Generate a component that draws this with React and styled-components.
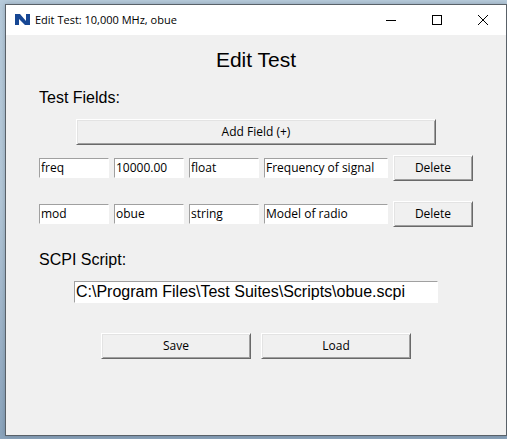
import React, { useState } from "react";
import styled, { createGlobalStyle } from "styled-components";

const GlobalStyle = createGlobalStyle`
  *, *::before, *::after { box-sizing: border-box; }
  body { margin: 0; background: #a9bdd0; }
`;

const Desktop = styled.div`
  display: flex;
  min-height: 100vh;
  padding: 4px 0 3px 5px;
  background: linear-gradient(180deg, #b7cbdb 0%, #b4c8d8 45%, #8ba4bc 100%);
`;

const Window = styled.main`
  flex: 1;
  min-width: 0;
  display: flex;
  flex-direction: column;
  border: 1px solid #596168;
  background: #f0f0f0;
  color: #000;
  box-shadow: 0 0 5px rgba(40, 60, 80, 0.3);
`;

const TitleBar = styled.header`
  display: flex;
  align-items: center;
  height: 30px;
  padding-left: 9px;
  background: #fff;
  font: 11px/16px "Open Sans", "Noto Sans", sans-serif;
`;

const Caption = styled.span`
  flex: 1;
  min-width: 0;
  margin-left: 5px;
  overflow: hidden;
  white-space: nowrap;
`;

const CaptionButton = styled.button`
  display: flex;
  align-items: center;
  justify-content: center;
  width: 46px;
  height: 30px;
  padding: 0;
  border: 0;
  background: #fff;
  color: #000;
`;

const Form = styled.form`
  flex: 1;
  display: flex;
  flex-direction: column;
  padding: 12px 33px 0;
`;

const Heading = styled.h1`
  margin: 0;
  font: 400 21px/26px "Liberation Sans", Arial, sans-serif;
  text-align: center;
`;

const SectionLabel = styled.label`
  display: block;
  margin-top: ${(p) => p.$gap};
  font: 16px/20px "Liberation Sans", Arial, sans-serif;
`;

const Button = styled.button`
  flex: 1;
  min-width: 0;
  height: 26px;
  padding: 0;
  border: 1px solid;
  border-color: #fff #696969 #696969 #fff;
  box-shadow: inset 1px 1px #e3e3e3, inset -1px -1px #a0a0a0;
  background: #f0f0f0;
  color: #000;
  font: 12px/16px "Open Sans", "Noto Sans", sans-serif;
`;

const Entry = styled.input`
  width: 100%;
  min-width: 0;
  height: 20px;
  padding: 0 1px 2px;
  border: 1px solid;
  border-color: #a0a0a0 #fff #fff #a0a0a0;
  border-radius: 0;
  background: #fff;
  color: #000;
  font: 12px/16px "Open Sans", "Noto Sans", sans-serif;
  outline: none;
`;

const PathEntry = styled(Entry)`
  height: 22px;
  padding: 0 1px;
  font: 16px/20px "Liberation Sans", Arial, sans-serif;
`;

const ButtonRow = styled.div`
  display: flex;
  gap: 10px;
  margin-top: ${(p) => p.$gap};
  padding: 0 ${(p) => p.$inset};
`;

const FieldList = styled.div`
  display: flex;
  flex-direction: column;
  gap: 20px;
  margin-top: 10px;
`;

const FieldRow = styled.div`
  display: grid;
  grid-template-columns: 70fr 70fr 70fr 124fr 80fr;
  align-items: center;
  gap: 5px;
`;

const PathRow = styled.div`
  display: flex;
  margin-top: 11px;
  padding: 0 35px;
`;

const initialFields = [
  { name: "freq", value: "10000.00", type: "float", description: "Frequency of signal" },
  { name: "mod", value: "obue", type: "string", description: "Model of radio" },
];
const columns = ["name", "value", "type", "description"];

function Logo() {
  return (
    <svg width="15" height="12" viewBox="0 0 15 12" aria-hidden="true">
      <path d="M0 0H5L11 7V0H15V11H10L4 5V11H0Z" fill="#174794" />
    </svg>
  );
}

function Glyph({ d, crisp }) {
  return (
    <svg width="10" height="10" viewBox="0 0 10 10" aria-hidden="true">
      <path d={d} fill="none" stroke="currentColor" shapeRendering={crisp ? "crispEdges" : "auto"} />
    </svg>
  );
}

export default function App() {
  const [fields, setFields] = useState(initialFields);
  const [path, setPath] = useState("C:\\Program Files\\Test Suites\\Scripts\\obue.scpi");

  const update = (index, key, text) =>
    setFields(fields.map((f, i) => (i === index ? { ...f, [key]: text } : f)));
  const add = () => setFields([...fields, { name: "", value: "", type: "", description: "" }]);
  const remove = (index) => setFields(fields.filter((_, i) => i !== index));

  return (
    <>
      <GlobalStyle />
      <Desktop>
        <Window>
          <TitleBar>
            <Logo />
            <Caption>Edit Test: 10,000 MHz, obue</Caption>
            <CaptionButton type="button" aria-label="Minimize">
              <Glyph d="M0 5.5H10" crisp />
            </CaptionButton>
            <CaptionButton type="button" aria-label="Maximize">
              <Glyph d="M.5 .5H9.5V9.5H.5Z" crisp />
            </CaptionButton>
            <CaptionButton type="button" aria-label="Close">
              <Glyph d="M0 0L10 10M10 0L0 10" />
            </CaptionButton>
          </TitleBar>
          <Form onSubmit={(e) => e.preventDefault()}>
            <Heading>Edit Test</Heading>
            <SectionLabel as="div" id="fields-label" $gap="15px">Test Fields:</SectionLabel>
            <ButtonRow $gap="11px" $inset="37px">
              <Button type="button" onClick={add}>Add Field (+)</Button>
            </ButtonRow>
            <FieldList role="group" aria-labelledby="fields-label">
              {fields.map((field, i) => (
                <FieldRow key={i}>
                  {columns.map((key) => (
                    <Entry
                      key={key}
                      aria-label={`Field ${i + 1} ${key}`}
                      value={field[key]}
                      onChange={(e) => update(i, key, e.target.value)}
                    />
                  ))}
                  <Button type="button" onClick={() => remove(i)}>Delete</Button>
                </FieldRow>
              ))}
            </FieldList>
            <SectionLabel htmlFor="script-path" $gap="23px">SCPI Script:</SectionLabel>
            <PathRow>
              <PathEntry id="script-path" value={path} onChange={(e) => setPath(e.target.value)} />
            </PathRow>
            <ButtonRow $gap="30px" $inset="62px">
              <Button type="submit">Save</Button>
              <Button type="button">Load</Button>
            </ButtonRow>
          </Form>
        </Window>
      </Desktop>
    </>
  );
}
